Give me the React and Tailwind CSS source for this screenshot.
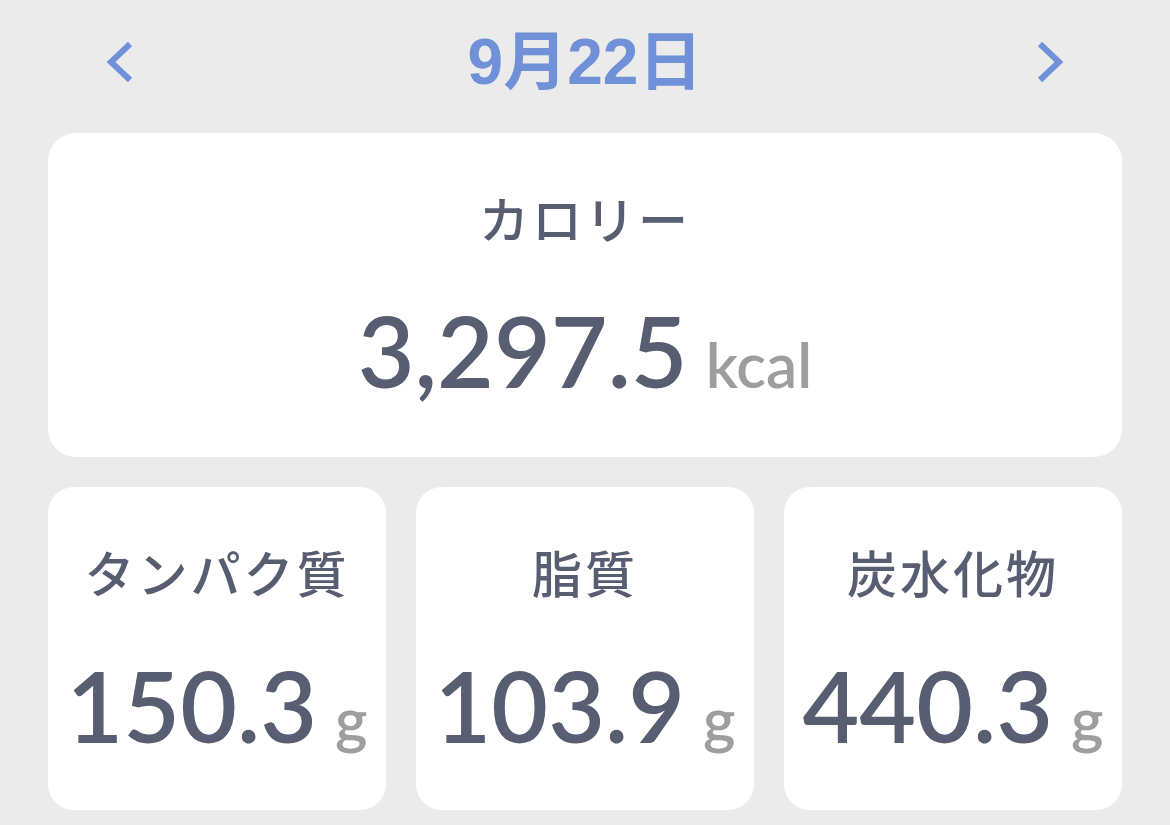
import React from "react";

const jp = { fontFamily: '"Noto Sans CJK JP", "Noto Sans", sans-serif' };
const num = { fontFamily: 'Lato, "Noto Sans", sans-serif' };

function Chevron({ dir }) {
  return (
    <svg width="30" height="42" viewBox="0 0 30 42" fill="none">
      <path
        d={dir === "left" ? "M26 3 L7 21 L26 39" : "M4 3 L23 21 L4 39"}
        stroke="#7090d8"
        strokeWidth="6"
        strokeLinecap="butt"
        strokeLinejoin="miter"
      />
    </svg>
  );
}

function Stat({ label, value, unit }) {
  return (
    <div className="flex flex-col items-center bg-white rounded-[26px]">
      <div className="pt-[59px] text-[50px] leading-none font-medium text-[#585e72] tracking-[3px]" style={jp}>
        {label}
      </div>
      <div className="mt-[60px] flex items-baseline leading-none" style={num}>
        <span className="text-[98px] font-semibold text-[#585e72]">{value}</span>
        <span className="ml-[18px] text-[62px] font-semibold text-[#9e9e9e]">{unit}</span>
      </div>
    </div>
  );
}

export default function App() {
  return (
    <div className="min-h-screen bg-[#ebebeb] px-12 pb-4">
      <div className="flex items-center justify-between h-[133px] pl-[56px] pr-[56px] pb-[10px]">
        <Chevron dir="left" />
        <div className="text-[64px] font-bold text-[#7090d8] leading-none" style={{ fontFamily: '"Liberation Sans", "Noto Sans CJK JP", sans-serif' }}>
          9月22日
        </div>
        <Chevron dir="right" />
      </div>
      <div className="h-[324px] bg-white rounded-[28px] flex flex-col items-center">
        <div className="pt-[59px] text-[50px] leading-none font-medium text-[#585e72] tracking-[3px]" style={jp}>
          カロリー
        </div>
        <div className="mt-[59px] flex items-baseline leading-none" style={num}>
          <span className="text-[98px] font-semibold text-[#585e72]">3,297.5</span>
          <span className="ml-[18px] text-[62px] font-semibold text-[#9e9e9e]">kcal</span>
        </div>
      </div>
      <div className="grid grid-cols-3 gap-[30px] mt-[30px] h-[323px]">
        <Stat label="タンパク質" value="150.3" unit="g" />
        <Stat label="脂質" value="103.9" unit="g" />
        <Stat label="炭水化物" value="440.3" unit="g" />
      </div>
    </div>
  );
}
